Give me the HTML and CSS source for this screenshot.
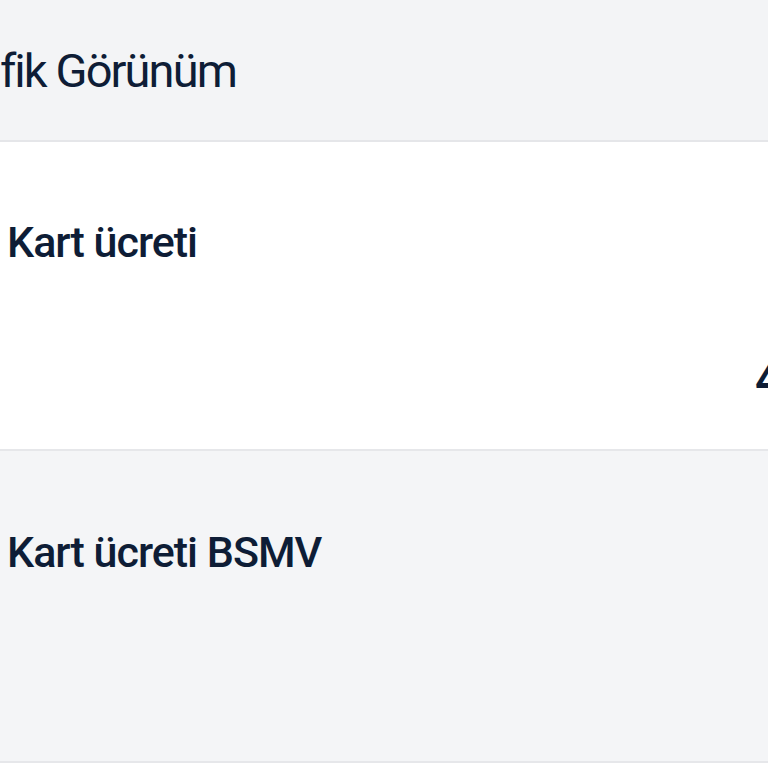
FILE: index.html
```html
<!DOCTYPE html>
<html lang="tr">
<head>
<meta charset="utf-8">
<link rel="stylesheet" href="styles.css">
</head>
<body>
<div class="page">
  <header class="head">
    <h1 class="title">Grafik Görünüm</h1>
  </header>
  <section class="row row-white">
    <div class="label">Kart ücreti</div>
    <div class="amount">4,50 TL</div>
  </section>
  <section class="row row-gray">
    <div class="label">Kart ücreti BSMV</div>
  </section>
</div>
</body>
</html>
```
FILE: styles.css
```css
html, body {
  margin: 0;
  padding: 0;
  background: #ffffff;
  overflow: hidden;
}
body {
  width: 768px;
  height: 768px;
  font-family: Roboto, "Noto Sans", sans-serif;
  color: #0e1d36;
}
.page {
  display: flex;
  flex-direction: column;
}
.head {
  height: 140px;
  background: #f3f4f6;
  border-bottom: 2px solid #e5e6e9;
  box-sizing: content-box;
  overflow: hidden;
}
.title {
  margin: 0;
  padding-top: 46px;
  font-size: 47px;
  line-height: 50px;
  font-weight: 400;
  letter-spacing: -1.9px;
  white-space: nowrap;
  text-indent: -67px;
}
.row {
  border-bottom: 2px solid #e6e7ea;
  padding-left: 7px;
  overflow: hidden;
}
.row-white {
  background: #ffffff;
  height: 229px;
  padding-top: 78px;
}
.row-gray {
  background: #f4f5f7;
  height: 231px;
  padding-top: 79px;
}
.label {
  font-size: 43px;
  line-height: 45px;
  font-weight: 500;
  letter-spacing: -1px;
  white-space: nowrap;
}
.amount {
  margin-top: 93px;
  padding-left: 748px;
  font-size: 44px;
  line-height: 44px;
  font-weight: 700;
  white-space: nowrap;
}
```
